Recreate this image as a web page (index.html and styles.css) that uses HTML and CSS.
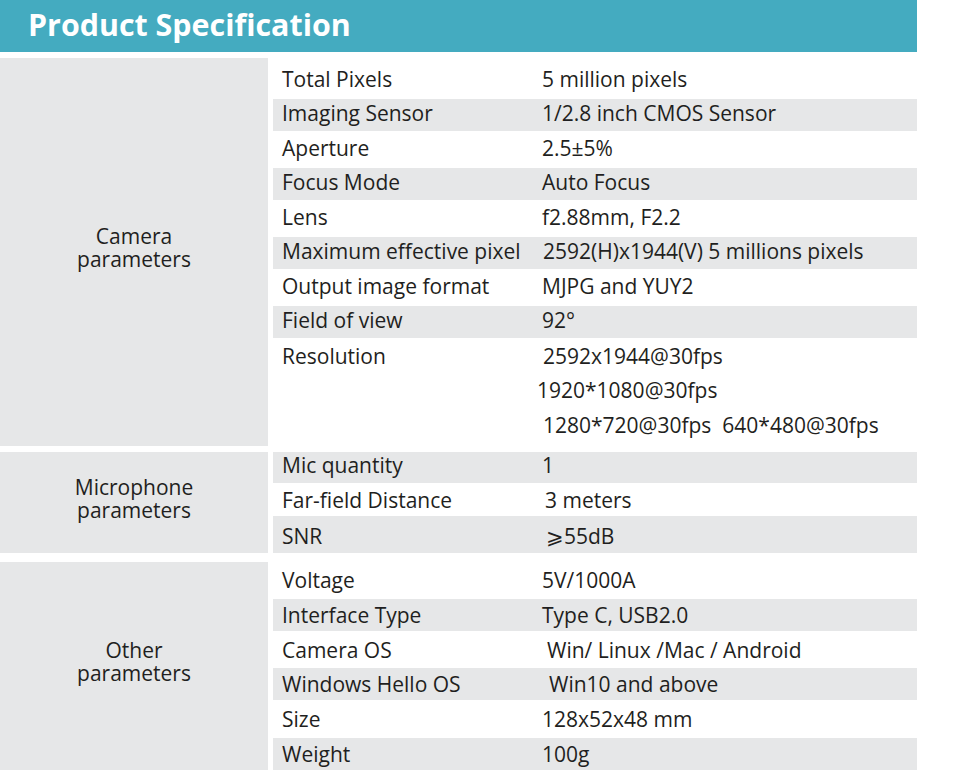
FILE: index.html
```html
<!DOCTYPE html>
<html lang="en">
<head>
<meta charset="utf-8">
<title>Product Specification</title>
<link rel="stylesheet" href="styles.css">
</head>
<body>
<header class="banner"><h1 class="banner-title">Product Specification</h1></header>
<main class="spec">
  <section class="group group-camera">
    <div class="group-name">Camera<br>parameters</div>
    <div class="rows">
      <div class="row"><span class="key">Total Pixels</span><span class="val">5 million pixels</span></div>
      <div class="row shade"><span class="key">Imaging Sensor</span><span class="val">1/2.8 inch CMOS Sensor</span></div>
      <div class="row"><span class="key">Aperture</span><span class="val">2.5±5%</span></div>
      <div class="row shade"><span class="key">Focus Mode</span><span class="val">Auto Focus</span></div>
      <div class="row"><span class="key">Lens</span><span class="val">f2.88mm, F2.2</span></div>
      <div class="row shade"><span class="key">Maximum effective pixel</span><span class="val nudge-1">2592(H)x1944(V) 5 millions pixels</span></div>
      <div class="row"><span class="key">Output image format</span><span class="val">MJPG and YUY2</span></div>
      <div class="row shade"><span class="key">Field of view</span><span class="val">92°</span></div>
      <div class="row row-multi"><span class="key">Resolution</span>
        <span class="val val-lines">
          <span class="line nudge-1">2592x1944@30fps</span>
          <span class="line nudge-back">1920*1080@30fps</span>
          <span class="line nudge-1">1280*720@30fps&nbsp;&nbsp;640*480@30fps</span>
        </span>
      </div>
    </div>
  </section>
  <section class="group group-mic">
    <div class="group-name">Microphone<br>parameters</div>
    <div class="rows">
      <div class="row shade row-short"><span class="key">Mic quantity</span><span class="val">1</span></div>
      <div class="row row-mid"><span class="key">Far-field Distance</span><span class="val nudge-2">3 meters</span></div>
      <div class="row shade row-tall"><span class="key">SNR</span><span class="val nudge-3">⩾55dB</span></div>
    </div>
  </section>
  <section class="group group-other">
    <div class="group-name">Other<br>parameters</div>
    <div class="rows">
      <div class="row"><span class="key">Voltage</span><span class="val">5V/1000A</span></div>
      <div class="row shade"><span class="key">Interface Type</span><span class="val">Type C, USB2.0</span></div>
      <div class="row"><span class="key">Camera OS</span><span class="val nudge-4">Win/ Linux /Mac / Android</span></div>
      <div class="row shade"><span class="key">Windows Hello OS</span><span class="val nudge-6">Win10 and above</span></div>
      <div class="row"><span class="key">Size</span><span class="val">128x52x48 mm</span></div>
      <div class="row shade"><span class="key">Weight</span><span class="val">100g</span></div>
    </div>
  </section>
</main>
</body>
</html>
```
FILE: styles.css
```css
html, body {
  margin: 0;
  padding: 0;
  background: #ffffff;
}

body {
  width: 960px;
  font-family: "Open Sans", "Noto Sans", "Liberation Sans", sans-serif;
  color: #1f1f21;
}

.banner {
  width: 917px;
  height: 52px;
  background: #44abc0;
  display: flex;
  align-items: center;
}

.banner-title {
  margin: 0 0 1px 28px;
  font-size: 30.4px;
  font-weight: 700;
  color: #ffffff;
  line-height: 1;
}

.spec {
  width: 917px;
  margin-top: 6px;
  display: flex;
  flex-direction: column;
}

.group {
  display: grid;
  grid-template-columns: 268px 644px;
  column-gap: 5px;
}

.group-mic {
  margin-top: 6px;
}

.group-other {
  margin-top: 9px;
}

.group-name {
  background: #e6e7e8;
  display: flex;
  align-items: center;
  justify-content: center;
  text-align: center;
  font-size: 21px;
  line-height: 23px;
  padding-bottom: 8px;
}

.rows {
  display: flex;
  flex-direction: column;
  row-gap: 2.5px;
}

.group-camera .rows {
  padding-top: 6.5px;
  padding-bottom: 4px;
}

.group-other .rows {
  padding-top: 2px;
  row-gap: 2.8px;
}

.group-mic .rows {
  row-gap: 0;
}

.row {
  box-sizing: border-box;
  height: 32px;
  display: grid;
  grid-template-columns: 269px 1fr;
  align-items: center;
  font-size: 21px;
  line-height: 32px;
}

.group-camera .row {
  line-height: 28px;
  padding-bottom: 4px;
}

.row.shade {
  background: #e6e7e8;
}

.group-mic .row-short {
  height: 31px;
  line-height: 27px;
  padding-bottom: 4px;
}

.group-mic .row-mid {
  height: 33px;
  line-height: 31px;
  padding-top: 2px;
}

.group-mic .row-tall {
  height: 37px;
  line-height: 33px;
  padding-top: 4px;
}

.group-camera .row-multi {
  height: auto;
  align-items: start;
  line-height: 34.5px;
  padding-bottom: 0;
  margin-top: -2px;
}

.key {
  padding-left: 9px;
  white-space: nowrap;
}

.val {
  white-space: nowrap;
}

.val-lines {
  display: flex;
  flex-direction: column;
}

.nudge-1 { padding-left: 1px; }
.nudge-2 { padding-left: 3px; }
.nudge-3 { padding-left: 4px; }
.nudge-4 { padding-left: 5px; }
.nudge-6 { padding-left: 7px; }
.nudge-back { margin-left: -5px; }
```
